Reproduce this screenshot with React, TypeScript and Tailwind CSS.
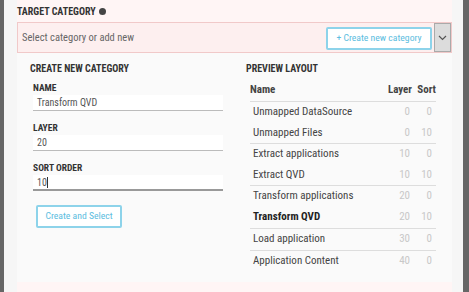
import React from "react";

const rows = [
  { name: "Unmapped DataSource", layer: 0, sort: 0, bold: false, line: false, h: "h-[21px]" },
  { name: "Unmapped Files", layer: 0, sort: 10, bold: false, line: true, h: "h-[21px]" },
  { name: "Extract applications", layer: 10, sort: 0, bold: false, line: false, h: "h-[21px]" },
  { name: "Extract QVD", layer: 10, sort: 10, bold: false, line: true, h: "h-[21px]" },
  { name: "Transform applications", layer: 20, sort: 0, bold: false, line: false, h: "h-[21px]" },
  { name: "Transform QVD", layer: 20, sort: 10, bold: true, line: true, h: "h-[22px]" },
  { name: "Load application", layer: 30, sort: 0, bold: false, line: true, h: "h-[22px]" },
  { name: "Application Content", layer: 40, sort: 0, bold: false, line: false, h: "h-[21px]" },
];

function Field({ label, value, focused }: { label: string; value: string; focused?: boolean }) {
  return (
    <div className="flex flex-col">
      <div className="text-[9.5px] font-bold text-[#333] leading-[12px] h-[12px] uppercase">{label}</div>
      <div
        className={
          "mt-[1px] h-[16px] bg-white flex items-center pl-[4px] text-[10px] text-[#555] " +
          (focused ? "border-b-2 border-[#999]" : "border-b border-[#bbb]")
        }
      >
        {value}
        {focused && <span className="inline-block w-px h-[11px] bg-[#333]" />}
      </div>
    </div>
  );
}

export default function App() {
  return (
    <div
      className="w-[469px] h-[292px] overflow-hidden bg-[#666] pl-[4px] pr-[6px]"
      style={{ fontFamily: '"Roboto Condensed", "Liberation Sans Narrow", "DejaVu Sans Condensed", Roboto, sans-serif' }}
    >
      <div className="h-full bg-[#f6f6f6] pl-[13px] pr-[11px]">
        <div className="h-full bg-[#fff5f5] flex flex-col">
          <div className="h-[22px] flex items-center text-[10px] font-bold text-[#333] gap-[3px]">
            TARGET CATEGORY
            <span className="inline-block w-[7px] h-[7px] rounded-full bg-[#444]" />
          </div>
          <div className="h-[31px] border border-[#f1c9c9] bg-[#fdefef] flex items-center pl-[4px]">
            <div className="flex-1 text-[10.5px] text-[#666]">Select category or add new</div>
            <div className="h-[23px] w-[106px] border-2 border-[#8dd3ea] bg-white rounded-[2px] flex items-center justify-center text-[9.7px] text-[#5cbde0] mt-[2px]">
              + Create new category
            </div>
            <div className="ml-[2px] h-[29px] w-[17px] bg-[#dcdcdc] border border-[#aaa] flex items-center justify-center">
              <svg width="9" height="6" viewBox="0 0 9 6">
                <path d="M1 1 L4.5 4.5 L8 1" fill="none" stroke="#555" strokeWidth="1.2" />
              </svg>
            </div>
          </div>
          <div className="h-[229px] bg-[#fafafa] flex">
            <div className="w-[229px] pl-[13px] pt-[10px] flex flex-col">
              <div className="text-[10px] font-bold text-[#333] leading-[12px]">CREATE NEW CATEGORY</div>
              <div className="pl-[3px] mt-[7px] flex flex-col gap-[11px] w-[193px]">
                <Field label="Name" value="Transform QVD" />
                <Field label="Layer" value="20" />
                <Field label="Sort order" value="10" focused />
              </div>
              <div className="mt-[14px] ml-[6px] h-[23px] w-[86px] border-2 border-[#8dd3ea] bg-white rounded-[2px] flex items-center justify-center text-[9.7px] text-[#5cbde0]">
                Create and Select
              </div>
            </div>
            <div className="flex-1 pt-[10px] pr-[16px] flex flex-col">
              <div className="text-[10px] font-bold text-[#333] leading-[12px]">PREVIEW LAYOUT</div>
              <div className="ml-[4px] mt-[4px] flex flex-col">
                <div className="h-[23px] flex items-center text-[11px] font-bold text-[#444] border-b border-[#ddd]">
                  <span className="flex-1">Name</span>
                  <span className="w-[30px] text-right">Layer</span>
                  <span className="w-[24px] text-right">Sort</span>
                </div>
                {rows.map((r) => (
                  <div
                    key={r.name}
                    className={r.h + " flex items-center pl-[3px] pr-[4px] text-[11px] " + (r.line ? "border-b border-[#ddd]" : "")}
                  >
                    <span className={"flex-1 " + (r.bold ? "font-bold text-[#222]" : "text-[#444]")}>{r.name}</span>
                    <span className="w-[30px] text-right text-[#c8c8c8]">{r.layer}</span>
                    <span className="w-[22px] text-right text-[#c8c8c8]">{r.sort}</span>
                  </div>
                ))}
              </div>
            </div>
          </div>
        </div>
      </div>
    </div>
  );
}
